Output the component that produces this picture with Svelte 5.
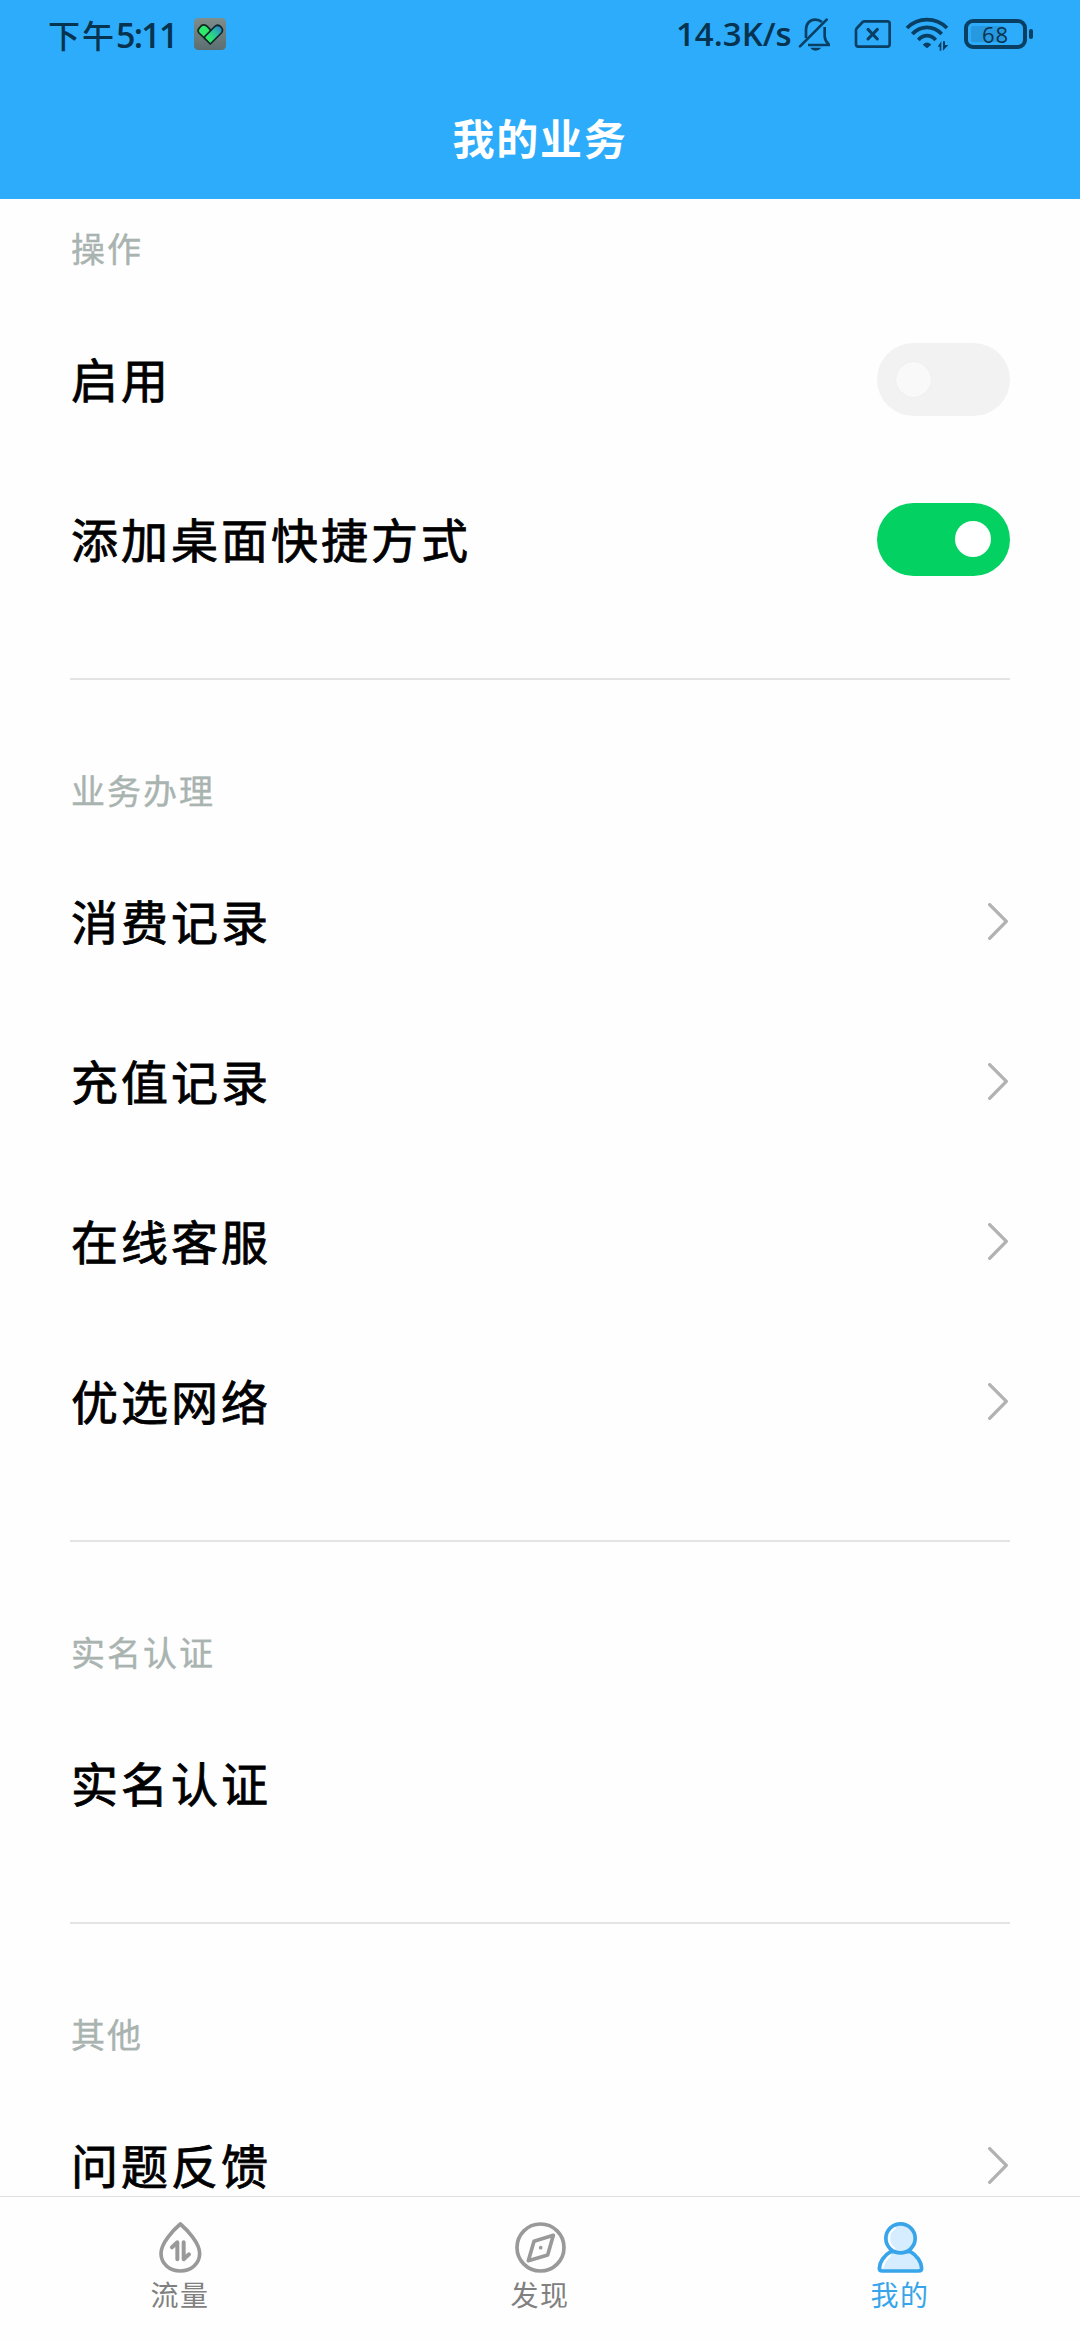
<script>
	let activeTab = 'mine';

	let sections = [
		{
			title: '操作',
			rows: [
				{ label: '启用', type: 'switch', on: false, disabled: true },
				{ label: '添加桌面快捷方式', type: 'switch', on: true }
			]
		},
		{
			title: '业务办理',
			rows: [
				{ label: '消费记录', type: 'link' },
				{ label: '充值记录', type: 'link' },
				{ label: '在线客服', type: 'link' },
				{ label: '优选网络', type: 'link' }
			]
		},
		{
			title: '实名认证',
			rows: [{ label: '实名认证', type: 'text' }]
		},
		{
			title: '其他',
			rows: [{ label: '问题反馈', type: 'link' }]
		}
	];

	const tabs = [
		{ id: 'flow', label: '流量' },
		{ id: 'discover', label: '发现' },
		{ id: 'mine', label: '我的' }
	];

	function toggle(row) {
		if (row.disabled) return;
		row.on = !row.on;
		sections = sections;
	}
</script>

<div class="screen">
	<header>
		<div class="status-bar">
			<span class="time">下午<span class="digits">5:11</span></span>
			<svg class="app-icon" viewBox="0 0 96 96">
				<defs>
					<linearGradient id="plate" x1="0" y1="0" x2="0" y2="1">
						<stop offset="0" stop-color="#7f8d8b" />
						<stop offset="1" stop-color="#5c6e70" />
					</linearGradient>
					<linearGradient id="check" x1="0" y1="1" x2="1" y2="0">
						<stop offset="0.25" stop-color="#2bea68" />
						<stop offset="0.6" stop-color="#2bbfa0" />
						<stop offset="0.95" stop-color="#2878d0" />
					</linearGradient>
				</defs>
				<rect width="96" height="96" rx="13" fill="url(#plate)" />
				<path d="M48 34 L38 24 Q29 17 21 24 L15 31 Q9 38 15 45 L32 61 L50 44 Z" fill="#2fe96c" stroke="#10291f" stroke-width="5" />
				<path d="M32 56 L61 27 Q71 17 80 26 Q90 36 82 45 L49 78 L32 61 Z" fill="url(#check)" stroke="#10252c" stroke-width="5" stroke-linejoin="round" />
			</svg>

			<span class="speed">14.3K/s</span>
			<svg class="bell" viewBox="0 0 102 102" fill="none" stroke="#083f63" stroke-width="8">
				<path d="M24 63 V38 C24 19 36 8 52 8 C61 8 67 11 72 15" />
				<path d="M80 30 V58 Q81 72 92 82 V84 H30" />
				<path d="M6 88 L86 8" stroke-linecap="round" />
				<path d="M36 92 H70 Q63 101 53 101 Q43 101 36 92 Z" fill="#083f63" stroke="none" />
			</svg>
			<svg class="sim" viewBox="0 0 111 90" fill="none" stroke="#083f63" stroke-width="8">
				<path d="M31 7 H100 Q107 7 107 14 V76 Q107 83 100 83 H13 Q6 83 6 76 V33 Q6 30 9 27 L26 9 Q28 7 31 7 Z" />
				<path d="M42 31 L70 60 M70 31 L42 60" stroke-width="9" stroke-linecap="round" />
			</svg>
			<svg class="wifi" viewBox="0 0 132 108" fill="none" stroke="#083f63" stroke-width="11">
				<path d="M6 36 Q31 11 66 11 Q101 11 126 36" />
				<path d="M22 54 Q41 34 66 34 Q91 34 110 54" />
				<path d="M40 72 Q51 59 66 59 Q81 59 92 72" />
				<path d="M53 86 Q66 73 79 86 L66 97 Z" fill="#083f63" stroke="none" />
				<path d="M98 92 L109 76 V104 H104 V92 Z" fill="#083f63" stroke="none" />
				<path d="M114 76 V104 L130 87 H120 V76 Z" fill="#083f63" stroke="none" />
			</svg>
			<div class="battery">
				<div class="shell">
					<div class="level" style="width: 68%"></div>
					<span>68</span>
				</div>
				<div class="cap"></div>
			</div>
		</div>
		<h1>我的业务</h1>
	</header>

	<main>
		{#each sections as section}
			<section>
				<h2>{section.title}</h2>
				{#each section.rows as row}
					<div class="row">
						<span class="label">{row.label}</span>
						{#if row.type === 'switch'}
							<button
								class="switch"
								class:on={row.on}
								disabled={row.disabled}
								aria-label={row.label}
								on:click={() => toggle(row)}
							>
								<i></i>
							</button>
						{:else if row.type === 'link'}
							<svg class="chevron" viewBox="0 0 60 111">
								<path d="M5 5 L55 55 L5 106" />
							</svg>
						{/if}
					</div>
				{/each}
			</section>
		{/each}
	</main>

	<nav>
		{#each tabs as tab}
			<button class="tab" class:active={activeTab === tab.id} on:click={() => (activeTab = tab.id)}>
				<svg viewBox="0 0 153 153" fill="none" stroke="currentColor" stroke-width="11" stroke-linejoin="round" stroke-linecap="round">
					{#if tab.id === 'flow'}
						<path d="M76 6 C55 24 18 63 18 94 C18 126 44 147 76 147 C108 147 134 126 134 94 C134 63 97 24 76 6 Z" />
						<path d="M51 76 L67 61 V112 M86 61 V112 L102 97" stroke-width="12" />
					{:else if tab.id === 'discover'}
						<circle cx="76.5" cy="76.5" r="70.5" />
						<path d="M57 58 L115 40 L98 99 L40 116 Z" />
						<circle cx="77" cy="77" r="5.5" fill="currentColor" stroke="none" />
					{:else}
						<path d="M47 89 C27 100 13 121 13 139 Q13 147 22 147 H131 Q140 147 140 139 C140 121 126 100 106 89 Z" fill="#d5edfe" />
						<path d="M45 101 C32 112 25 125 23 137" stroke="#ffffff" stroke-width="6" />
						<ellipse cx="76.5" cy="49" rx="44" ry="43.5" fill="#d5edfe" />
						<path d="M60 18 C37 32 37 66 58 79" stroke="#ffffff" stroke-width="6" />
					{/if}
				</svg>
				<span>{tab.label}</span>
			</button>
		{/each}
	</nav>
</div>

<style>
	:global(body) {
		margin: 0;
		background: #fefefe;
	}

	.screen {
		display: flex;
		flex-direction: column;
		width: 1080px;
		height: 2340px;
		overflow: hidden;
		background: #fefefe;
		font-family: 'Noto Sans CJK SC', sans-serif;
	}

	header {
		flex: none;
		height: 199px;
		background: #2dacfc;
	}

	.status-bar {
		display: flex;
		align-items: center;
		box-sizing: border-box;
		height: 68px;
		padding-left: 48px;
		color: #06334f;
	}

	.time {
		width: 146px;
		font-size: 32px;
		font-weight: 500;
		letter-spacing: 2px;
		line-height: 66px;
		white-space: nowrap;
	}

	.digits {
		font-family: 'Open Sans', sans-serif;
		font-size: 34px;
		font-weight: 600;
		letter-spacing: -1.7px;
	}

	.app-icon {
		width: 32px;
		height: 32px;
	}

	.speed {
		width: 121.5px;
		margin-left: 450px;
		font-family: 'Open Sans', sans-serif;
		font-size: 33px;
		font-weight: 600;
		line-height: 68px;
		white-space: nowrap;
	}

	.bell {
		width: 34px;
		height: 34px;
	}

	.sim {
		width: 37px;
		height: 30px;
		margin-left: 22.5px;
	}

	.wifi {
		width: 44px;
		height: 36px;
		margin-left: 14px;
	}

	.battery {
		display: flex;
		align-items: center;
		gap: 1.5px;
		margin-left: 15px;
	}

	.shell {
		display: grid;
		align-items: center;
		box-sizing: border-box;
		width: 63px;
		height: 30px;
		padding: 3px;
		border: 4px solid #083f63;
		border-radius: 9px;
	}

	.level {
		grid-area: 1 / 1;
		height: 16px;
		border-radius: 2px;
		background: #2799e0;
	}

	.shell span {
		grid-area: 1 / 1;
		font-family: 'Open Sans', sans-serif;
		font-size: 22px;
		font-weight: 500;
		letter-spacing: 1px;
		line-height: 16px;
		text-align: center;
	}

	.cap {
		width: 4px;
		height: 10px;
		border-radius: 2px;
		background: #083f63;
	}

	h1 {
		margin: 0;
		color: #fff;
		font-size: 42px;
		font-weight: 700;
		letter-spacing: 1.7px;
		line-height: 137px;
		text-align: center;
	}

	main {
		flex: 1;
		min-height: 0;
		overflow: hidden;
		padding: 0 70px;
	}

	section {
		padding-bottom: 59px;
		border-bottom: 2px solid #e4e4e4;
		margin-bottom: 61px;
	}

	h2 {
		margin: 0;
		padding-left: 1px;
		height: 100px;
		color: #a9b3b0;
		font-size: 34px;
		font-weight: 400;
		letter-spacing: 2px;
		line-height: 98px;
		-webkit-text-stroke: 0.4px currentColor;
	}

	.row {
		display: flex;
		align-items: center;
		justify-content: space-between;
		height: 160px;
		padding-left: 1px;
	}

	.label {
		padding-bottom: 3px;
		color: #000;
		font-size: 47px;
		font-weight: 400;
		letter-spacing: 3px;
		line-height: 50px;
		-webkit-text-stroke: 0.8px currentColor;
	}

	.switch {
		display: flex;
		align-items: center;
		box-sizing: border-box;
		width: 133px;
		height: 73px;
		padding: 0 19px;
		border: none;
		border-radius: 37px;
		background: #f2f2f2;
	}

	.switch i {
		width: 35px;
		height: 35px;
		border-radius: 50%;
		background: #f9f9f9;
		box-shadow: 0 0 1px #e0e0e0;
	}

	.switch.on {
		justify-content: flex-end;
		background: #03d162;
	}

	.switch.on i {
		width: 36px;
		height: 36px;
		background: #fff;
		box-shadow: none;
	}

	.chevron {
		width: 20px;
		height: 37px;
		margin-right: 2px;
	}

	.chevron path {
		fill: none;
		stroke: #b2b2b2;
		stroke-width: 10;
		stroke-linecap: round;
		stroke-linejoin: round;
	}

	nav {
		display: flex;
		flex: none;
		box-sizing: border-box;
		height: 144px;
		border-top: 1px solid #dedede;
	}

	.tab {
		display: flex;
		flex: 1;
		flex-direction: column;
		align-items: center;
		padding: 25px 0 0;
		border: none;
		background: none;
		color: #999;
		font-family: inherit;
	}

	.tab svg {
		width: 51px;
		height: 51px;
	}

	.tab span {
		margin-top: 2px;
		color: #808080;
		font-size: 28px;
		letter-spacing: 1.5px;
		line-height: 38px;
	}

	.tab.active,
	.tab.active span {
		color: #38a5ea;
	}
</style>
